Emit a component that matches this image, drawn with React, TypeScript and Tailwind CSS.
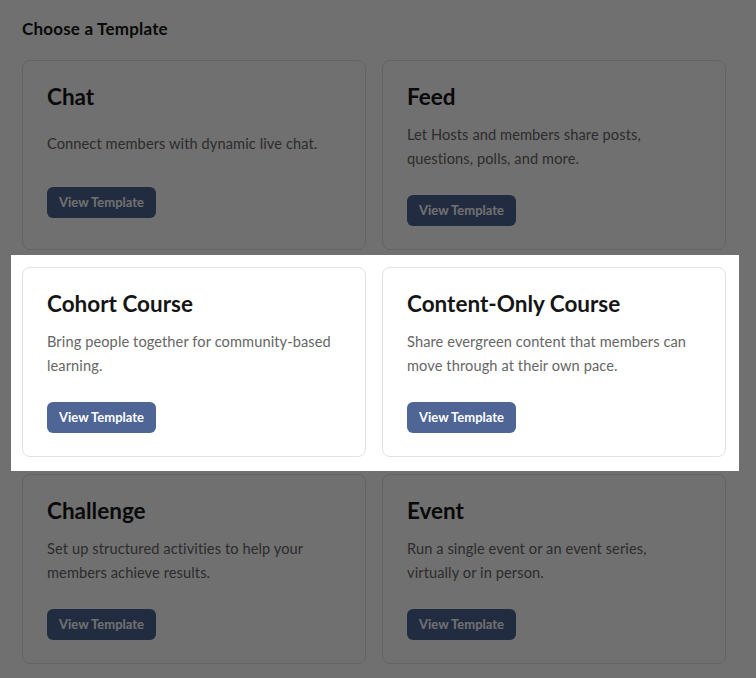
const templates = [
  [
    { title: "Chat", description: "Connect members with dynamic live chat.", single: true },
    { title: "Feed", description: "Let Hosts and members share posts, questions, polls, and more." },
  ],
  [
    { title: "Cohort Course", description: "Bring people together for community-based learning." },
    { title: "Content-Only Course", description: "Share evergreen content that members can move through at their own pace." },
  ],
  [
    { title: "Challenge", description: "Set up structured activities to help your members achieve results." },
    { title: "Event", description: "Run a single event or an event series, virtually or in person." },
  ],
];

type Template = { title: string; description: string; single?: boolean };

const TemplateCard = ({ template }: { template: Template }) => (
  <div className="flex flex-col items-start rounded-lg border border-[#e2e2e2] bg-white px-6 pt-6 pb-[23px]">
    <h3 className="text-[22.5px] leading-6 font-bold text-[#151515]">{template.title}</h3>
    <p
      className={
        template.single
          ? "mt-4 text-[14.6px] leading-[38px] tracking-[0.1px] text-[#666]"
          : "mt-[14px] text-[14.6px] leading-6 tracking-[0.1px] text-[#666]"
      }
    >
      {template.description}
    </p>
    <button className="mt-6 h-[31px] rounded-md bg-[#4e6595] px-3 text-[13px] font-bold text-white">
      View Template
    </button>
  </div>
);

export default function App() {
  return (
    <div className="min-h-screen bg-white pl-[22px] pt-[19px] pb-[14px] font-['Lato','Noto_Sans',sans-serif]">
      <h2 className="mb-[21px] text-[17px] leading-5 font-bold tracking-[0.2px] text-[#151515]">Choose a Template</h2>
      <div className="flex w-[704px] flex-col gap-[17px]">
        {templates.map((row, i) => (
          <div key={i} className={i === 1 ? "relative grid grid-cols-2 gap-4" : "grid grid-cols-2 gap-4"}>
            {row.map((t) => (
              <TemplateCard key={t.title} template={t} />
            ))}
            {/* spotlight on the highlighted row */}
            {i === 1 && (
              <div className="pointer-events-none absolute -top-3 -right-[13px] -bottom-[14px] -left-[11px] z-10 shadow-[0_0_0_9999px_rgba(0,0,0,0.56)]" />
            )}
          </div>
        ))}
      </div>
    </div>
  );
}
